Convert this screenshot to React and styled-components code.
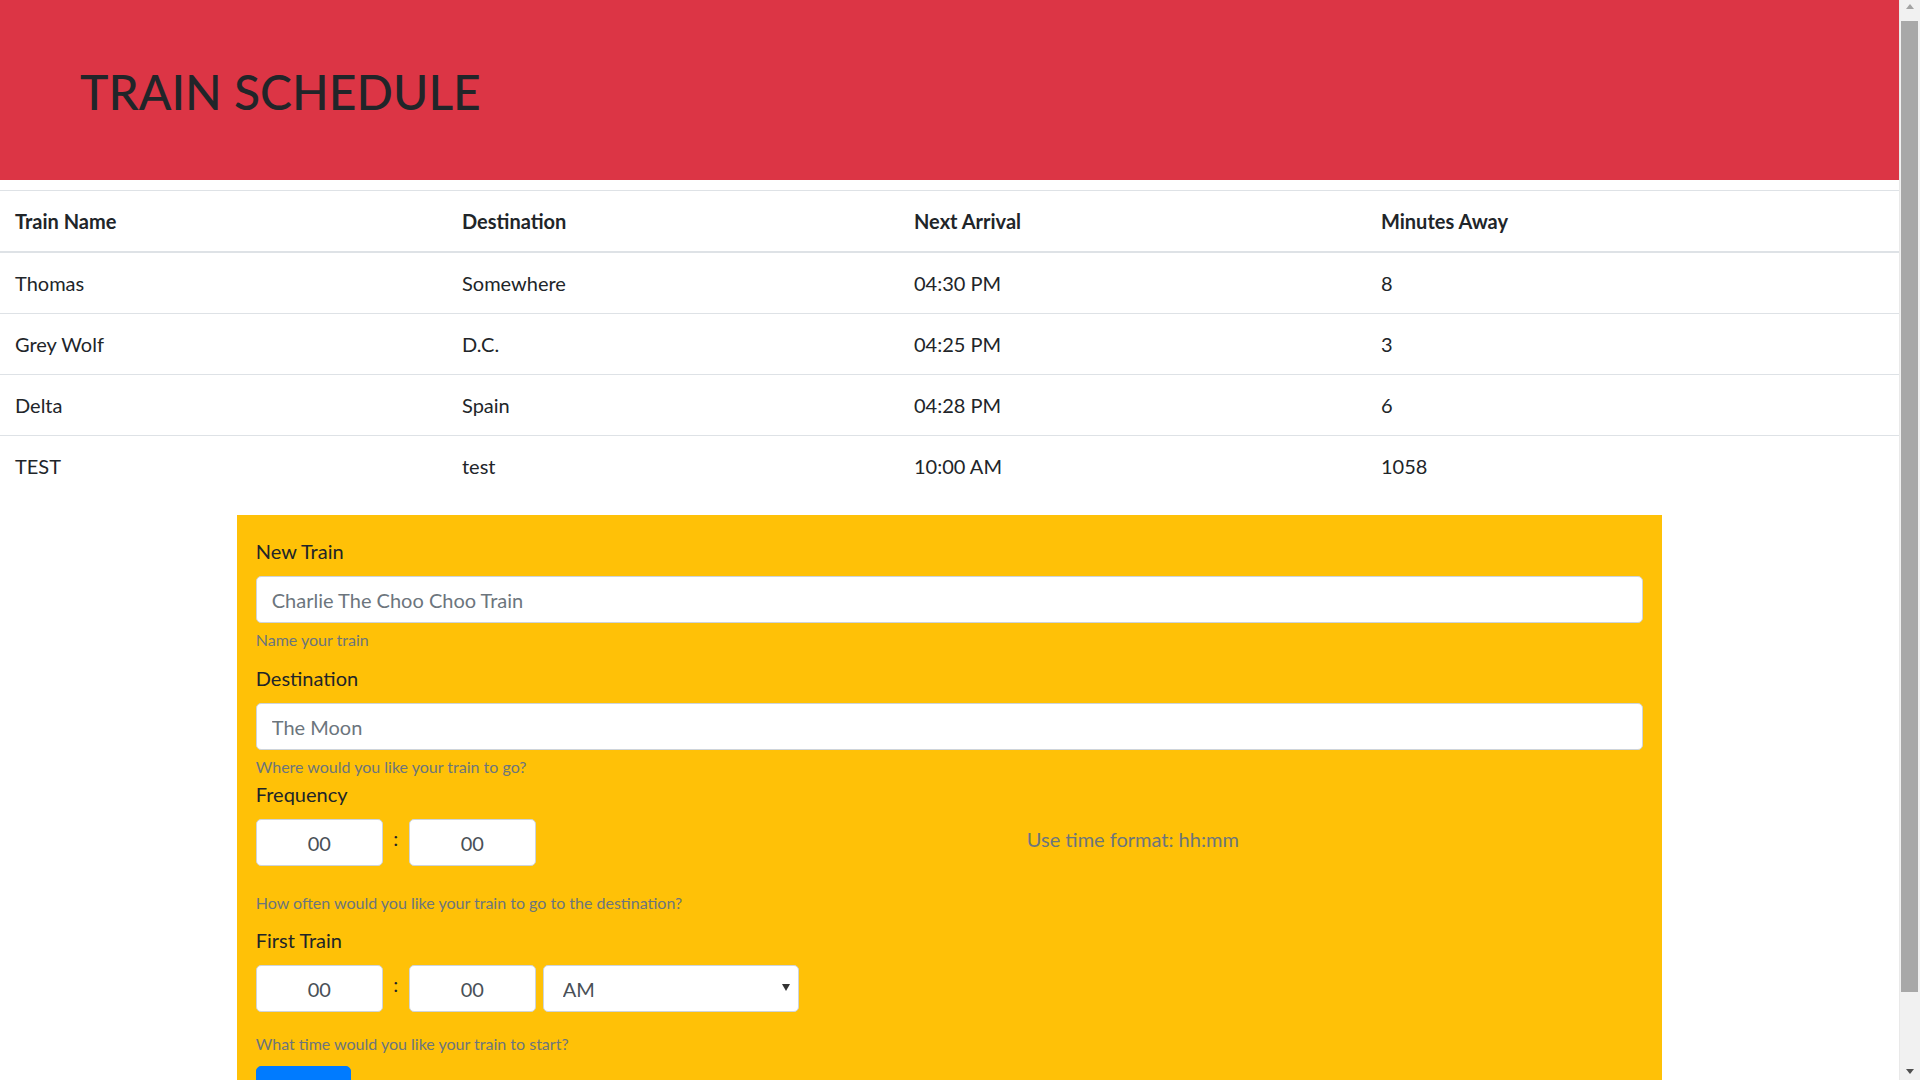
import styled, { createGlobalStyle } from 'styled-components';

const GlobalStyle = createGlobalStyle`
  html {
    font-size: 20px;
  }
  body {
    margin: 0;
    font-family: Lato, "Open Sans", sans-serif;
    font-size: 20px;
    line-height: 1.5;
    color: #212529;
    background: #fff;
  }
  * {
    box-sizing: border-box;
  }
`;

// page area, leaves room for the window scrollbar on the right
const Page = styled.div`
  margin-right: 21px;
`;

const ScrollTrack = styled.div`
  position: fixed;
  top: 0;
  right: 0;
  width: 21px;
  height: 100vh;
  display: flex;
  flex-direction: column;
  background: #f1f1f1;
  border-left: 1px solid #e9e9e9;
`;

const ScrollButton = styled.div`
  height: 21px;
  display: flex;
  align-items: center;
  justify-content: center;
  &::before {
    content: '';
    border-left: 4.5px solid transparent;
    border-right: 4.5px solid transparent;
    ${(p) =>
      p.$down
        ? 'border-top: 5px solid #505050; margin-top: 4px;'
        : 'border-bottom: 5px solid #a3a3a3; margin-top: -8px;'}
  }
`;

const ScrollArea = styled.div`
  flex: 1;
  padding: 0 2px 0 1px;
`;

const Thumb = styled.div`
  height: 971px;
  background: #a8a8a8;
`;

const Banner = styled.header`
  background-color: #dc3545;
  padding: 62px 80px 58px;
  margin-bottom: 10px;
`;

const Title = styled.h1`
  margin: 0;
  font-size: 48px;
  font-weight: 500;
  line-height: 60px;
  color: #212529;
`;

const Table = styled.table`
  width: 100%;
  border-collapse: collapse;
  color: #212529;
`;

const HeadCell = styled.th`
  width: ${(p) => p.$width || 'auto'};
  padding: 15px;
  text-align: left;
  font-weight: 700;
  border-top: 1px solid #dee2e6;
  border-bottom: 2px solid #dee2e6;
  vertical-align: bottom;
`;

const Cell = styled.td`
  padding: 15px;
  border-top: 1px solid #dee2e6;
`;

const FormBox = styled.form`
  width: 1425px;
  margin: 19px auto 20px;
  padding: 21px 18.75px 21px;
  background-color: #ffc107;
`;

const Group = styled.div`
  margin-bottom: ${(p) => p.$gap || '0px'};
`;

const Label = styled.label`
  display: block;
  margin-bottom: 10px;
  font-size: 20px;
  font-weight: 400;
  line-height: 30px;
`;

const TextInput = styled.input`
  display: block;
  width: 100%;
  height: 47px;
  padding: 7.5px 15px;
  font-family: inherit;
  font-size: 20px;
  color: #495057;
  background: #fff;
  border: 1px solid #ced4da;
  border-radius: 5px;
  &::placeholder {
    color: #6c757d;
  }
`;

const Help = styled.small`
  display: block;
  margin-top: ${(p) => p.$top || '5px'};
  font-size: 16px;
  line-height: 24px;
  color: #6c757d;
`;

const TimeRow = styled.div`
  display: flex;
  align-items: flex-start;
`;

const TimeInput = styled.input`
  width: 127px;
  height: 47px;
  padding: 7.5px 15px;
  font-family: inherit;
  font-size: 20px;
  color: #495057;
  text-align: center;
  background: #fff;
  border: 1px solid #ced4da;
  border-radius: 5px;
  &::placeholder {
    color: #495057;
  }
`;

const Colon = styled.span`
  width: 26px;
  text-align: center;
  font-size: 20px;
  line-height: 30px;
  margin-top: 4px;
  color: #212529;
`;

const SelectWrap = styled.div`
  position: relative;
  margin-left: 7px;
  width: 256px;
  &::after {
    content: '';
    position: absolute;
    right: 9px;
    top: 19px;
    border-left: 4px solid transparent;
    border-right: 4px solid transparent;
    border-top: 7px solid #333;
    pointer-events: none;
  }
`;

const Select = styled.select`
  width: 100%;
  height: 47px;
  padding: 7.5px 15px 7.5px 19px;
  font-family: inherit;
  font-size: 20px;
  color: #495057;
  background: #fff;
  border: 1px solid #ced4da;
  border-radius: 5px;
  appearance: none;
`;

const Note = styled.span`
  margin-left: 491px;
  margin-top: 5px;
  font-size: 20px;
  line-height: 30px;
  color: #6c757d;
`;

const SubmitButton = styled.button`
  margin-top: 10px;
  width: 95px;
  height: 47px;
  padding: 7.5px 15px;
  font-family: inherit;
  font-size: 20px;
  color: #fff;
  background-color: #007bff;
  border: 1px solid #007bff;
  border-radius: 5px;
`;

const trains = [
  { name: 'Thomas', destination: 'Somewhere', next: '04:30 PM', away: '8' },
  { name: 'Grey Wolf', destination: 'D.C.', next: '04:25 PM', away: '3' },
  { name: 'Delta', destination: 'Spain', next: '04:28 PM', away: '6' },
  { name: 'TEST', destination: 'test', next: '10:00 AM', away: '1058' },
];

function App() {
  return (
    <>
      <GlobalStyle />
      <Page>
        <Banner>
          <Title>TRAIN SCHEDULE</Title>
        </Banner>

        <Table>
          <thead>
            <tr>
              <HeadCell $width="447px">Train Name</HeadCell>
              <HeadCell $width="452px">Destination</HeadCell>
              <HeadCell $width="467px">Next Arrival</HeadCell>
              <HeadCell>Minutes Away</HeadCell>
            </tr>
          </thead>
          <tbody>
            {trains.map((t) => (
              <tr key={t.name}>
                <Cell>{t.name}</Cell>
                <Cell>{t.destination}</Cell>
                <Cell>{t.next}</Cell>
                <Cell>{t.away}</Cell>
              </tr>
            ))}
          </tbody>
        </Table>

        <FormBox onSubmit={(e) => e.preventDefault()}>
          <Group $gap="11px">
            <Label htmlFor="train-name">New Train</Label>
            <TextInput id="train-name" placeholder="Charlie The Choo Choo Train" />
            <Help>Name your train</Help>
          </Group>

          <Group>
            <Label htmlFor="destination">Destination</Label>
            <TextInput id="destination" placeholder="The Moon" />
            <Help>Where would you like your train to go?</Help>
          </Group>

          <Group $gap="10px">
            <Label>Frequency</Label>
            <TimeRow>
              <TimeInput placeholder="00" />
              <Colon>:</Colon>
              <TimeInput placeholder="00" />
              <Note>Use time format: hh:mm</Note>
            </TimeRow>
            <Help $top="25px">How often would you like your train to go to the destination?</Help>
          </Group>

          <Group>
            <Label>First Train</Label>
            <TimeRow>
              <TimeInput placeholder="00" />
              <Colon>:</Colon>
              <TimeInput placeholder="00" />
              <SelectWrap>
                <Select defaultValue="AM">
                  <option value="AM">AM</option>
                  <option value="PM">PM</option>
                </Select>
              </SelectWrap>
            </TimeRow>
            <Help $top="20px">What time would you like your train to start?</Help>
          </Group>

          <SubmitButton type="submit">Submit</SubmitButton>
        </FormBox>
      </Page>

      <ScrollTrack aria-hidden="true">
        <ScrollButton />
        <ScrollArea>
          <Thumb />
        </ScrollArea>
        <ScrollButton $down />
      </ScrollTrack>
    </>
  );
}

export default App;
